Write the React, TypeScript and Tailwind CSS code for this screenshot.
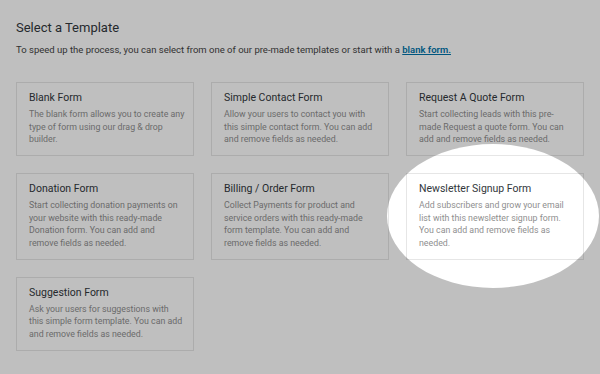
import React from "react";

type Tpl = { title: string; lines: string[] };

const templates: Tpl[] = [
  { title: "Blank Form", lines: ["The blank form allows you to create any", "type of form using our drag & drop", "builder."] },
  { title: "Simple Contact Form", lines: ["Allow your users to contact you with", "this simple contact form. You can add", "and remove fields as needed."] },
  { title: "Request A Quote Form", lines: ["Start collecting leads with this pre-", "made Request a quote form. You can", "add and remove fields as needed."] },
  { title: "Donation Form", lines: ["Start collecting donation payments on", "your website with this ready-made", "Donation form. You can add and", "remove fields as needed."] },
  { title: "Billing / Order Form", lines: ["Collect Payments for product and", "service orders with this ready-made", "form template. You can add and", "remove fields as needed."] },
  { title: "Newsletter Signup Form", lines: ["Add subscribers and grow your email", "list with this newsletter signup form.", "You can add and remove fields as", "needed."] },
  { title: "Suggestion Form", lines: ["Ask your users for suggestions with", "this simple form template. You can add", "and remove fields as needed."] },
];

function Card({ t }: { t: Tpl }) {
  return (
    <div className="border border-[#e6e6e6] bg-white px-[12px] pt-[8px] pb-[9px]">
      <div className="text-[10.5px] leading-[14px] text-[#32373c] whitespace-nowrap">{t.title}</div>
      <div className="mt-[3px] text-[8.8px] leading-[12.67px] text-[#8f8f8f] whitespace-nowrap">
        {t.lines.map((l, i) => (
          <div key={i}>{l}</div>
        ))}
      </div>
    </div>
  );
}

export default function App() {
  return (
    <div
      className="relative w-[600px] h-[374px] overflow-hidden bg-white"
      style={{ fontFamily: "Roboto, 'Liberation Sans', Arial, sans-serif" }}
    >
      <div className="px-[16px] pt-[20px]">
        <h1 className="text-[13px] leading-[16px] text-[#32373c]">Select a Template</h1>
        <p className="mt-[7px] text-[9.5px] leading-[13px] text-[#444] whitespace-nowrap">
          To speed up the process, you can select from one of our pre-made templates or start with a{" "}
          <a className="font-semibold text-[#0073aa] underline">blank form.</a>
        </p>
        <div className="mt-[26px] grid w-[568px] grid-cols-3 gap-[17px]">
          {templates.map((t) => (
            <Card key={t.title} t={t} />
          ))}
        </div>
      </div>
      <div className="absolute left-[387px] top-[144px] h-[144px] w-[212px] rounded-[50%] shadow-[0_0_0_1000px_rgba(0,0,0,0.25)]" />
    </div>
  );
}
